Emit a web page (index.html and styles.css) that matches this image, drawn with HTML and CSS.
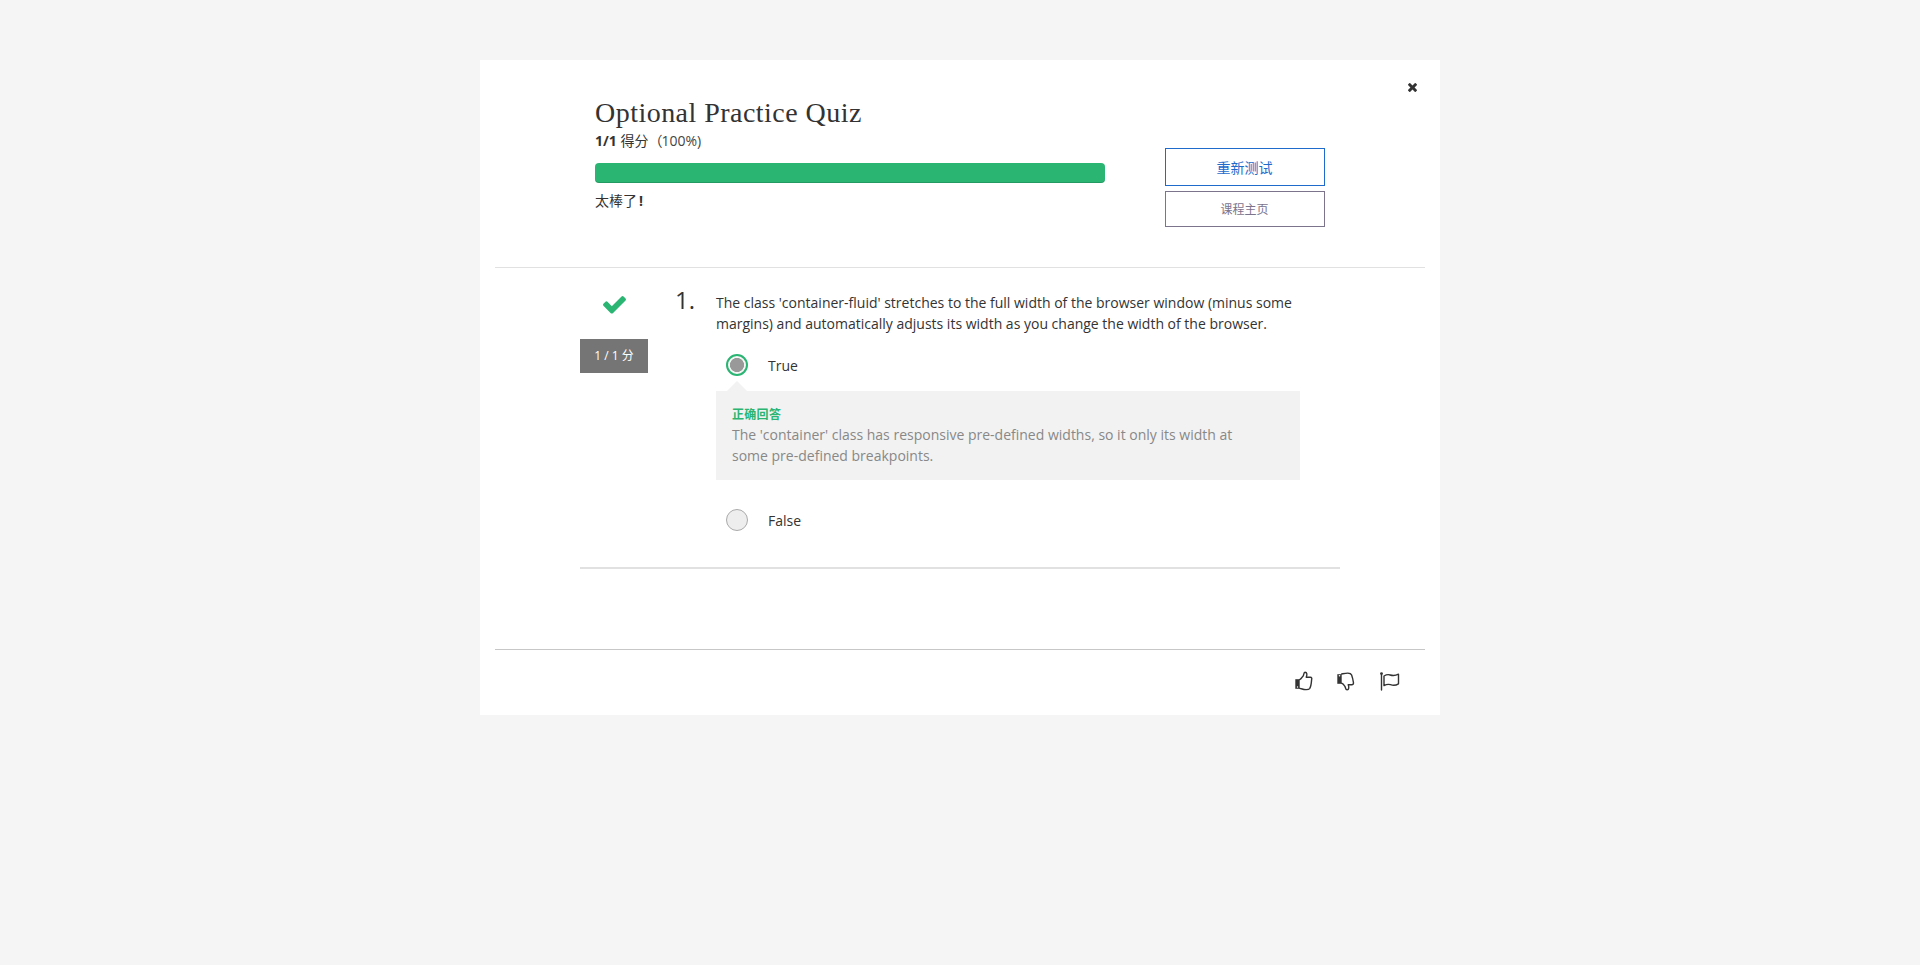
FILE: index.html
```html
<!DOCTYPE html>
<html lang="zh-CN">
<head>
<meta charset="utf-8">
<title>Optional Practice Quiz</title>
<link rel="stylesheet" href="styles.css">
</head>
<body>
<main class="card">
  <button class="close" aria-label="关闭"><svg viewBox="302 366 1188 1188"><path d="M1490 1322q0 40-28 68l-136 136q-28 28-68 28t-68-28l-294-294-294 294q-28 28-68 28t-68-28l-136-136q-28-28-28-68t28-68l294-294-294-294q-28-28-28-68t28-68l136-136q28-28 68-28t68 28l294 294 294-294q28-28 68-28t68 28l136 136q28 28 28 68t-28 68l-294 294 294 294q28 28 28 68z"/></svg></button>
  <header class="summary">
    <div class="result">
      <h1 class="title">Optional Practice Quiz</h1>
      <p class="score"><b>1/1</b> <span class="han">得分（</span>100%)</p>
      <div class="bar"></div>
      <p class="praise">太棒了<b class="bang">!</b></p>
    </div>
    <div class="actions">
      <button class="btn retry">重新测试</button>
      <button class="btn home">课程主页</button>
    </div>
  </header>
  <section class="question">
    <div class="status">
      <svg class="check" viewBox="121 334 1550 1188"><path d="M1671 566q0 40-28 68l-724 724-136 136q-28 28-68 28t-68-28l-136-136-362-362q-28-28-28-68t28-68l136-136q28-28 68-28t68 28l294 295 656-657q28-28 68-28t68 28l136 136q28 28 28 68z"/></svg>
      <span class="points">1 / 1 分</span>
    </div>
    <div class="number">1.</div>
    <div class="body">
      <p class="prompt"><span class="line">The class 'container-fluid' stretches to the full width of the browser window (minus some</span><span class="line">margins) and automatically adjusts its width as you change the width of the browser.</span></p>
      <div class="option"><span class="radio correct"></span><span>True</span></div>
      <div class="feedback">
        <strong class="verdict">正确回答</strong>
        <p class="explain"><span class="line">The 'container' class has responsive pre-defined widths, so it only its width at</span><span class="line">some pre-defined breakpoints.</span></p>
      </div>
      <div class="option"><span class="radio"></span><span>False</span></div>
    </div>
  </section>
  <footer class="footer">
    <svg class="icon up" viewBox="0 0 18 20"><path class="fill" d="M.3 8.200h4.400v9.600H.3z"/><circle class="dot" cx="2.500" cy="16" r=".7"/><path d="M4.700 8.600C6.500 7.800 7.300 5.800 8.300 4.700 8.900 3.800 8.500 1.300 10 1.200c2.300 0 2.200 2.800 1.200 5h4.100c1.500 0 1.700 1.500 1.300 2.500-.2 3-.4 6.500-2 8.900-1.100 1.500-5.700 1-7.400.4L4.700 17.300"/></svg>
    <svg class="icon down" viewBox="0 0 18 20"><path class="fill" d="M.3 3.200h4.400v9.600H.3z"/><circle class="dot" cx="2.500" cy="4.800" r=".8"/><path d="M4.700 3c2-.4 4-.9 6-.9 2.200 0 3.400.5 3.900 2 .8 2.200 1.500 5.200 1.900 7.700 0 1.500-.6 2-1.700 2h-3.600c1 2.200.8 5-1.100 5.100-1.700 0-1.500-2.400-2.200-3.500C7 14 6 12.500 4.700 12.300"/></svg>
    <svg class="icon flag" viewBox="0 0 20 20"><path d="M1.500 3v16"/><circle class="fill" cx="1.500" cy="2.600" r="1.400"/><path d="M4 5c2-1.200 4.200-1.700 6.200-1 3 1 5 .9 8.300-.8v9.600c-3 1.900-5.300 1.800-8 .9-2.300-.8-4.500-.2-6.500.9z"/></svg>
  </footer>
</main>
</body>
</html>
```
FILE: styles.css
```css
* { box-sizing: border-box; }
body { margin: 0; min-height: 965px; padding-top: 60px; background: #f5f5f5; color: #333; font: 14px/21px "Open Sans", "Noto Sans CJK SC", sans-serif; }
h1, p { margin: 0; }
button { font-family: inherit; background: none; cursor: pointer; }
.card { position: relative; width: 960px; height: 655px; margin: 0 auto; padding: 0 15px; background: #fff; display: flex; flex-direction: column; }
.close { position: absolute; top: 23px; right: 23px; width: 9px; height: 9px; padding: 0; border: 0; display: flex; }
.close svg { width: 9px; height: 9px; fill: #333; }
.summary { height: 208px; flex: none; padding: 35px 100px 0; border-bottom: 1px solid #e1e1e1; display: flex; justify-content: space-between; }
.result { width: 510px; }
.title { font: 400 28px/35px "Liberation Serif", serif; letter-spacing: .47px; white-space: nowrap; }
.score { line-height: 22px; white-space: nowrap; color: #444; }
.score b, .han { color: #333; }
.han { margin-right: -1px; }
.bar { height: 20px; margin-top: 11px; border-radius: 4px; background: #2ab573; box-shadow: inset 0 -1px 0 rgba(0, 0, 0, .15); }
.praise { margin-top: 7px; }
.bang { margin-left: 2px; }
.actions { width: 160px; padding-top: 53px; display: flex; flex-direction: column; gap: 5px; }
.btn { border: 1px solid; padding: 0 1px 1px 0; }
.retry { height: 38px; color: #1f6bcc; font-size: 14px; }
.home { height: 36px; color: #7c738c; font-size: 12px; }
.question { margin: 0 85px; height: 301px; flex: none; border-bottom: 2px solid #e1e1e1; display: flex; }
.status { width: 68px; margin-right: 27px; padding-top: 28px; display: flex; flex-direction: column; align-items: center; }
.check { width: 23px; height: 17.600px; fill: #2ab573; }
.points { width: 68px; height: 34px; margin-top: 25px; background: #757575; color: #fff; font-size: 12px; line-height: 33px; text-align: center; }
.number { width: 41px; padding-top: 18px; font-size: 24px; line-height: 28px; }
.body { width: 584px; padding-top: 24px; }
.line { display: block; white-space: nowrap; }
.option { display: flex; align-items: center; height: 22px; padding-left: 10px; gap: 20px; }
.prompt + .option { margin-top: 20px; }
.radio { width: 22px; height: 22px; border: 1px solid #aaa; border-radius: 50%; background: #eee; }
.correct { border: 2px solid #2ab573; background: radial-gradient(circle, #999 0 6.700px, #f5f5f5 7.400px); }
.feedback { position: relative; height: 89px; margin: 15px 0 29px; padding: 13px 16px; background: #f2f2f2; }
.feedback::before { content: ""; position: absolute; top: -10px; left: 11px; border: solid transparent; border-width: 0 10px 10px; border-bottom-color: #f2f2f2; }
.verdict { display: block; height: 20px; color: #2ab573; font-size: 12px; letter-spacing: .3px; }
.explain { color: #888; }
.footer { margin-top: 80px; height: 66px; padding: 21px 25px 0 0; border-top: 1px solid #c7c7c7; display: flex; justify-content: flex-end; }
.icon { height: 20px; fill: none; stroke: #333; stroke-width: 1.400; stroke-linejoin: round; stroke-linecap: round; }
.icon .fill { fill: #333; stroke: none; }
.icon .dot { fill: #fff; stroke: none; }
.up { width: 18px; margin-right: 24px; }
.down { width: 18px; margin-right: 25px; }
.flag { width: 20px; }
```
